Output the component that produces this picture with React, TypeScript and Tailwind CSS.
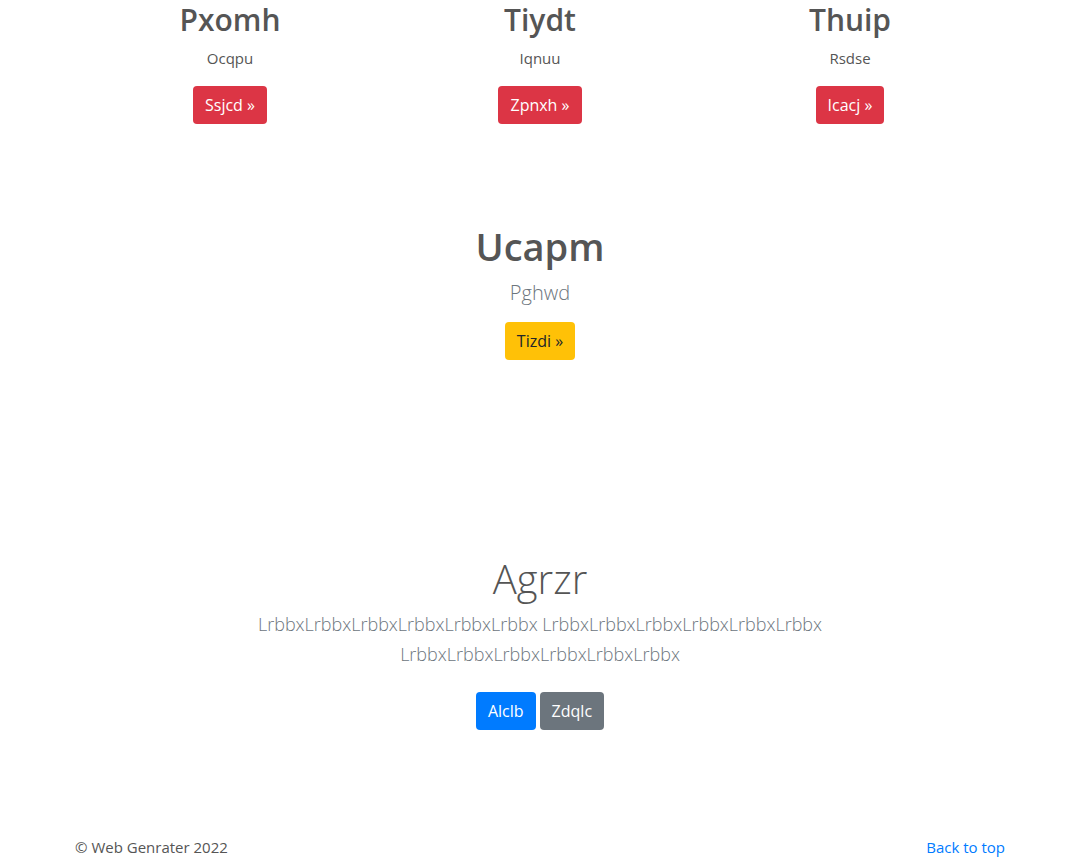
import React from "react";

const features = [
  { title: "Pxomh", text: "Ocqpu", cta: "Ssjcd" },
  { title: "Tiydt", text: "Iqnuu", cta: "Zpnxh" },
  { title: "Thuip", text: "Rsdse", cta: "Icacj" },
];

const font = { fontFamily: '"Open Sans", "Noto Sans", sans-serif' };

export default function App() {
  return (
    <div style={font} className="bg-white text-[#555] min-h-[858px]">
      <div className="mx-auto w-[960px] px-[15px]">
        {/* three column row */}
        <div className="grid grid-cols-3 pt-[2px]">
          {features.map((f) => (
            <div key={f.title} className="flex flex-col items-center text-center">
              <h2 className="text-[30px] leading-[36px] font-semibold mb-2">{f.title}</h2>
              <p className="text-[15px] leading-6 mb-4">{f.text}</p>
              <button className="bg-[#dc3545] text-white text-[16px] leading-6 px-3 py-[7px] rounded">
                {f.cta} &raquo;
              </button>
            </div>
          ))}
        </div>

        {/* highlight */}
        <div className="flex flex-col items-center text-center mt-[98px]">
          <h1 className="text-[38px] leading-[48px] font-semibold mb-2">Ucapm</h1>
          <p className="text-[20px] leading-[30px] font-light text-[#6c757d] mb-[14px]">Pghwd</p>
          <button className="bg-[#ffc107] text-[#212529] text-[16px] leading-6 px-3 py-[7px] rounded">
            Tizdi &raquo;
          </button>
        </div>

        {/* jumbotron */}
        <div className="flex flex-col items-center text-center mt-[195px]">
          <h1 className="text-[40px] leading-[48px] font-light mb-[6px]">Agrzr</h1>
          <p className="text-[18px] leading-[30px] font-light text-[#6c757d] mb-4 max-w-[640px]">
            LrbbxLrbbxLrbbxLrbbxLrbbxLrbbx LrbbxLrbbxLrbbxLrbbxLrbbxLrbbx LrbbxLrbbxLrbbxLrbbxLrbbxLrbbx
          </p>
          <div className="flex gap-1 mt-[7px]">
            <button className="bg-[#007bff] text-white text-[16px] leading-6 px-3 py-[7px] rounded">Alclb</button>
            <button className="bg-[#6c757d] text-white text-[16px] leading-6 px-3 py-[7px] rounded">Zdqlc</button>
          </div>
        </div>

        {/* footer */}
        <footer className="flex justify-between items-center mt-[105px] text-[15px] leading-6">
          <p>&copy; Web Genrater 2022</p>
          <a href="#" className="text-[#007bff]">Back to top</a>
        </footer>
      </div>
    </div>
  );
}
